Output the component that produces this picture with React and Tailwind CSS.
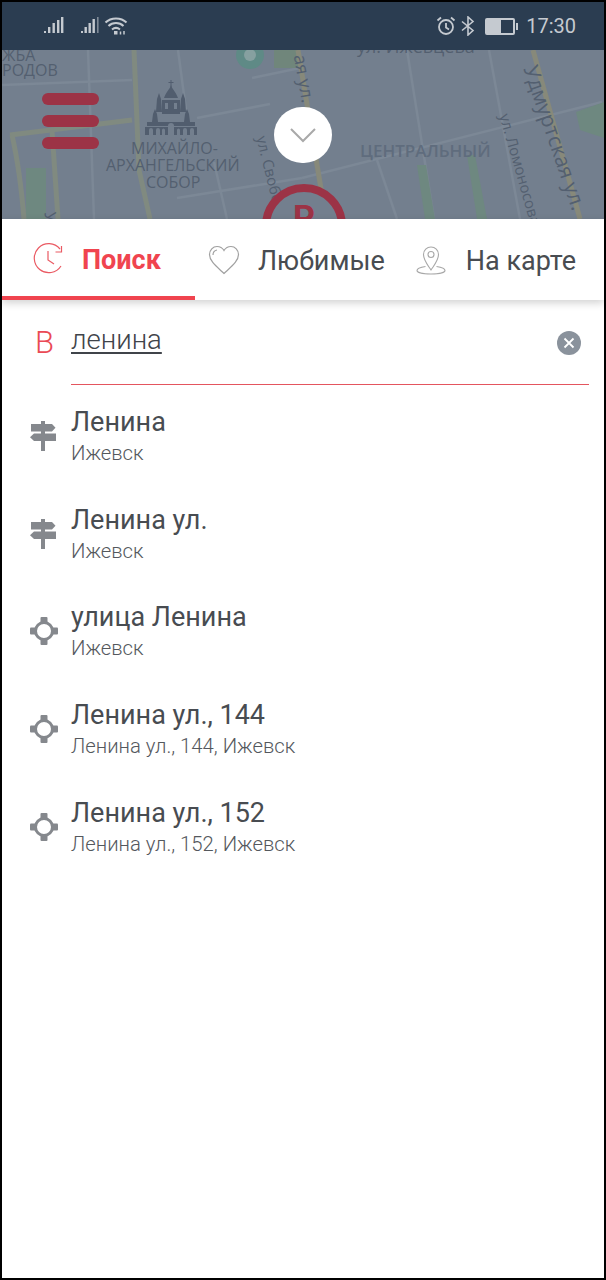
const rows = [
  { icon: "sign", title: "Ленина", sub: "Ижевск" },
  { icon: "sign", title: "Ленина ул.", sub: "Ижевск" },
  { icon: "target", title: "улица Ленина", sub: "Ижевск" },
  { icon: "target", title: "Ленина ул., 144", sub: "Ленина ул., 144, Ижевск" },
  { icon: "target", title: "Ленина ул., 152", sub: "Ленина ул., 152, Ижевск" },
];

function SignIcon() {
  return (
    <svg width="28" height="30" viewBox="0 0 28 30" fill="#85888d">
      <rect x="12" y="0" width="4" height="30" />
      <path d="M2 3h21l3.500 3.700-3.500 3.700H2z" />
      <path d="M27 12.500h-22l-4 3.700 4 3.700h22z" />
    </svg>
  );
}

function TargetIcon() {
  return (
    <svg width="30" height="30" viewBox="0 0 30 30" fill="none">
      <circle cx="15" cy="15" r="8.500" stroke="#85888d" strokeWidth="3" />
      <rect x="11.500" y="1" width="7" height="6.500" rx="1" fill="#85888d" />
      <rect x="11.500" y="22.500" width="7" height="6.500" rx="1" fill="#85888d" />
      <rect x="1" y="11.500" width="6.500" height="7" rx="1" fill="#85888d" />
      <rect x="22.500" y="11.500" width="6.500" height="7" rx="1" fill="#85888d" />
    </svg>
  );
}

function MapDrawing() {
  const road = "#808a80";
  const minor = "#7c8896";
  const ink = "#515d6e";
  const bg = "#737f8e";
  return (
    <svg width="602" height="169" viewBox="0 0 602 169" className="block">
      <rect width="602" height="169" fill={bg} />
      <g className="blur-[0.7px]">
        <g fill="none" stroke={minor} strokeWidth="2.500">
          <path d="M86 0 L92 169" />
          <path d="M176 0 L184 60" />
          <path d="M250 28 L298 18" />
          <path d="M0 35 L130 30" />
          <path d="M195 68 L268 54" />
          <path d="M225 169 L212 112" />
          <path d="M175 148 L300 128" />
          <path d="M300 128 L600 52" />
          <path d="M405 0 L432 169" />
          <path d="M487 0 L518 169" />
          <path d="M375 110 L395 169" />
        </g>
        <path d="M24 118 h20 v51 h-20z" fill="#6e8880" />
        <path d="M415 115 h9 l9 54 h-10z" fill="#6e8880" />
        <path d="M465 105 h8 l12 64 h-10z" fill="#6e8880" />
        <path d="M574 62 L602 52 V88 L578 80z" fill="#6e8880" />
        <path d="M272 0 h24 v18 h-24z" fill="#70867b" />
        <g fill="none" stroke={road} strokeWidth="5">
          <path d="M132 0 L137 120 L148 169" />
          <path d="M8 85 L130 70" />
          <path d="M10 85 Q18 120 22 169" />
          <path d="M50 80 L56 169" />
        </g>
        <g fill="none" stroke="#87897a" strokeWidth="5">
          <path d="M296 0 L324 169" />
          <path d="M531 0 L578 169" />
        </g>
        <circle cx="248" cy="5" r="14" fill="#5f8a86" />
        <circle cx="248" cy="5" r="6" fill="#86a0a0" />
      </g>
      <g fill={ink} className="blur-[0.3px]">
        <rect x="168.500" y="30" width="1" height="7" />
        <rect x="166.500" y="32" width="5" height="1" />
        <path d="M169 35c-1 4-5 7-7 13h14c-2-6-6-9-7-13z" />
        <path d="M160 50h18v14h-18z" />
        <path d="M154 62l1-13 2-6 2 6 1 13zM178 62l1-13 2-6 2 6 1 13z" />
        <path d="M150 72l1-8 2-5 2 5 1 8zM182 72l1-8 2-5 2 5 1 8z" />
        <path d="M145 72h48v4h-48zM143 77h52v8h-52z" />
      </g>
      <g fill={bg}>
        <rect x="163" y="53" width="3" height="6" />
        <rect x="172" y="53" width="3" height="6" />
        <path d="M166 85v-9a3 3 0 0 1 6 0v9z" />
        <path d="M147 85v-5a2 2 0 0 1 4 0v5zM154 85v-5a2 2 0 0 1 4 0v5zM160 85v-5a1.500 1.500 0 0 1 3 0v5zM175 85v-5a1.500 1.500 0 0 1 3 0v5zM181 85v-5a2 2 0 0 1 4 0v5zM188 85v-5a2 2 0 0 1 4 0v5z" />
      </g>
    </svg>
  );
}

function MapText({ className, children }) {
  return <span className={`absolute whitespace-nowrap font-['Open_Sans',sans-serif] ${className}`}>{children}</span>;
}

export default function App() {
  return (
    <div className="flex h-[1280px] w-[606px] flex-col overflow-hidden border-2 border-black bg-white font-['Roboto',sans-serif]">
      <div className="relative z-10 flex h-[48px] shrink-0 items-center bg-[#2b3d51] pl-[41px] pr-[28px] text-[#c5cad0]">
        <svg width="22" height="18" viewBox="0 0 22 18" fill="#c5cad0">
          <rect x="1" y="14" width="2" height="2" /><rect x="5" y="10" width="2.400" height="6" /><rect x="9.500" y="6" width="2.400" height="10" /><rect x="14" y="3" width="2.400" height="13" /><rect x="18" y="0" width="2.400" height="16" />
        </svg>
        <svg className="ml-[15px]" width="20" height="18" viewBox="0 0 20 18" fill="#c5cad0">
          <rect x="1" y="14" width="2" height="2" /><rect x="4.500" y="10" width="2.400" height="6" /><rect x="8.500" y="6" width="2.400" height="10" /><rect x="12.500" y="2" width="2.400" height="14" /><rect x="17" y="0" width="1.600" height="16" opacity=".55" />
        </svg>
        <svg className="ml-[4px]" width="24" height="20" viewBox="0 0 24 20" fill="none" stroke="#c5cad0" strokeWidth="2">
          <path d="M1.500 6.500C7 1 17 1 22.500 6.500" />
          <path d="M4.500 10c4-4 11-4 15 0" />
          <path d="M8 13.500c2.500-2 5.500-2 8 0" />
          <rect x="10" y="15" width="3.500" height="3.500" fill="#c5cad0" stroke="none" />
          <path d="M16.500 15.500v3M20 15v3.500" strokeWidth="1.500" />
        </svg>
        <div className="ml-auto flex items-center">
          <svg width="20" height="20" viewBox="0 0 20 20" fill="none" stroke="#c5cad0" strokeWidth="1.800">
            <circle cx="10" cy="11" r="7" />
            <path d="M10 7v4.500l3 2M1.500 4.500L5 1.500M18.500 4.500L15 1.500" />
          </svg>
          <svg className="ml-[4px]" width="16" height="20" viewBox="0 0 16 20" fill="none" stroke="#c5cad0" strokeWidth="1.600">
            <path d="M2 5.500l11 9-5 4.500V1l5 4.500-11 9" />
          </svg>
          <div className="relative ml-[9px] h-[17px] w-[30px] rounded-[2px] border-2 border-[#c5cad0]">
            <div className="h-full w-[14px] bg-[#c5cad0]" />
            <div className="absolute right-[-5px] top-[3px] h-[7px] w-[2px] bg-[#c5cad0]" />
          </div>
          <span className="ml-[11px] text-[20px] leading-none text-[#c5cad0]">17:30</span>
        </div>
      </div>

      <div className="relative h-[169px] shrink-0 overflow-hidden text-[#535f70]">
        <MapDrawing />
        <MapText className="left-[0px] top-[-7px] text-[16px]">ЖБА</MapText>
        <MapText className="left-[0px] top-[8px] text-[16px]">РОДОВ</MapText>
        <MapText className="left-[129px] top-[86px] text-[16px]">МИХАЙЛО-</MapText>
        <MapText className="left-[104px] top-[103px] text-[16px]">АРХАНГЕЛЬСКИЙ</MapText>
        <MapText className="left-[144px] top-[120px] text-[16px]">СОБОР</MapText>
        <MapText className="left-[355px] top-[-17px] text-[18px]">ул. Ижевцева</MapText>
        <MapText className="left-[358px] top-[88px] text-[17px] font-semibold text-[#5f6c7d]">ЦЕНТРАЛЬНЫЙ</MapText>
        <MapText className="left-[226px] top-[118px] rotate-[76deg] text-[15px]">ул. Свободы</MapText>
        <MapText className="left-[461px] top-[108px] rotate-[74deg] text-[15px]">ул. Ломоносова</MapText>
        <MapText className="left-[477px] top-[72px] rotate-[71deg] text-[21px]">Удмуртская ул.</MapText>
        <MapText className="left-[278px] top-[15px] rotate-[80deg] text-[18px]">ая ул.</MapText>
        <MapText className="left-[44px] top-[155px] rotate-[85deg] text-[16px]">У</MapText>

        <div className="absolute left-[40px] top-[43px] flex w-[57px] flex-col gap-[10px]">
          <div className="h-[12px] rounded-full bg-[#9c3346]" />
          <div className="h-[12px] rounded-full bg-[#9c3346]" />
          <div className="h-[12px] rounded-full bg-[#9c3346]" />
        </div>

        <div className="absolute left-[260px] top-[134px] flex h-[84px] w-[84px] justify-center rounded-full border-[8px] border-[#9c3346] bg-[#737f8e] pt-[8px]">
          <span className="font-['Roboto',sans-serif] text-[34px] font-bold leading-none text-[#9c3346]">P</span>
        </div>

        <div className="absolute left-[272px] top-[57px] flex h-[56px] w-[58px] items-center justify-center rounded-full bg-white">
          <svg width="28" height="16" viewBox="0 0 28 16" fill="none" stroke="#a9a9a9" strokeWidth="2"><path d="M2 2l12 12L26 2" /></svg>
        </div>
      </div>

      <div className="relative z-10 flex h-[81px] shrink-0 items-start bg-white shadow-[0_3px_8px_rgba(0,0,0,0.18)]">
        <div className="flex h-[81px] w-[193px] items-center border-b-[4px] border-[#f0444f] pl-[31px] pt-[3px]">
          <svg width="32" height="32" viewBox="0 0 32 32" fill="none" stroke="#ea5a63" strokeWidth="1.200">
            <path d="M28 23A14.500 14.500 0 1 1 27 6" />
            <path d="M28.500 3v6h-6" />
            <path d="M15 8v9l6 4" />
          </svg>
          <span className="ml-[17px] pt-[3px] text-[27px] font-bold leading-none text-[#f0444f]">Поиск</span>
        </div>
        <div className="flex h-[81px] items-center pl-[13px]">
          <svg width="32" height="30" viewBox="0 0 32 30" fill="none" stroke="#a0a0a0" strokeWidth="1.200">
            <path d="M16 28.500C8 21 1.500 16 1.500 9.500 1.500 5 5 1.500 9 1.500c3 0 5.500 1.500 7 4 1.500-2.500 4-4 7-4 4 0 7.500 3.500 7.500 8 0 6.500-6.500 11.500-14.500 19z" />
            <path d="M5 10c0-2.500 1.500-4.500 4-5" />
          </svg>
          <span className="ml-[18px] pt-[3px] text-[27px] leading-none text-[#484c51]">Любимые</span>
        </div>
        <div className="flex h-[81px] items-center pl-[31px]">
          <svg width="30" height="30" viewBox="0 0 30 30" fill="none" stroke="#a8a8a8" strokeWidth="1.100">
            <path d="M15 25C11 19 7.500 15 7.500 9.500a7.500 7.500 0 0 1 15 0C22.500 15 19 19 15 25z" />
            <circle cx="15" cy="9.500" r="3" />
            <path d="M9.500 21.500C4 22.300 1 24 1 25.500 1 27.500 7 29 15 29s14-1.500 14-3.500c0-1.500-3-3.200-8.500-4" />
          </svg>
          <span className="ml-[20px] pt-[3px] text-[27px] leading-none text-[#484c51]">На карте</span>
        </div>
      </div>

      <div className="flex h-[85px] shrink-0 flex-col">
        <div className="flex h-[84px] items-center pb-[3px]">
          <span className="ml-[33px] w-[36px] pt-[3px] text-[31px] font-light leading-none text-[#ea4a55]">В</span>
          <span className="pb-[1px] text-[27.500px] font-light leading-none text-[#40444a] underline decoration-2 underline-offset-[3px]">ленина</span>
          <div className="ml-auto mr-[23px] mt-[4px] flex h-[24px] w-[24px] items-center justify-center rounded-full bg-[#8a929c]">
            <svg width="12" height="12" viewBox="0 0 12 12" stroke="#fff" strokeWidth="1.800"><path d="M1.500 1.500l9 9M10.500 1.500l-9 9" /></svg>
          </div>
        </div>
        <div className="ml-[69px] mr-[15px] h-px bg-[#e4555e]" />
      </div>

      <div className="flex flex-col pt-[18px]">
        {rows.map((r) => (
          <div key={r.title} className="flex h-[97.700px] items-start">
            <div className="ml-[27px] mt-[18px] flex w-[42px] justify-start">
              {r.icon === "sign" ? <SignIcon /> : <TargetIcon />}
            </div>
            <div className="flex flex-col">
              <span className="text-[27px] leading-[38px] text-[#484c51]">{r.title}</span>
              <span className="text-[20.300px] font-light leading-[24px] text-[#54585d]">{r.sub}</span>
            </div>
          </div>
        ))}
      </div>
    </div>
  );
}
